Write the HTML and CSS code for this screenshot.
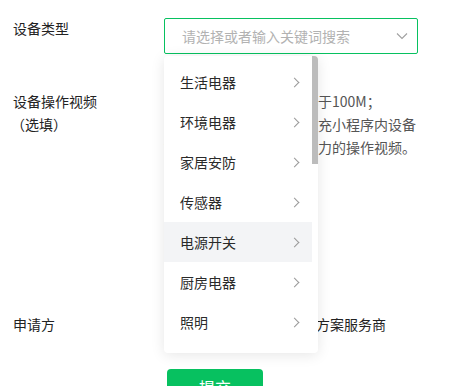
FILE: index.html
```html
<!DOCTYPE html>
<html>
<head>
    <meta charset="UTF-8">
    <title>设备信息</title>
    <link rel="stylesheet" href="styles.css">
</head>
<body>
    <div class="form">
        <div class="form-row">
            <div class="form-label">设备类型</div>
            <div class="form-field">
                <div class="select">
                    <div class="select-box">
                        <span class="placeholder">请选择或者输入关键词搜索</span>
                        <svg class="select-arrow" width="12" height="8" viewBox="0 0 12 8"><path d="M1 1.5 L6 6.5 L11 1.5" fill="none" stroke="#a0a0a0" stroke-width="1.1"/></svg>
                    </div>
                    <!-- Dropdown -->
                    <div class="dropdown">
                        <div class="dropdown-list">
                            <div class="dropdown-item">生活电器<span class="chevron"></span></div>
                            <div class="dropdown-item">环境电器<span class="chevron"></span></div>
                            <div class="dropdown-item">家居安防<span class="chevron"></span></div>
                            <div class="dropdown-item">传感器<span class="chevron"></span></div>
                            <div class="dropdown-item active">电源开关<span class="chevron"></span></div>
                            <div class="dropdown-item">厨房电器<span class="chevron"></span></div>
                            <div class="dropdown-item">照明<span class="chevron"></span></div>
                            <div class="dropdown-item">个人护理<span class="chevron"></span></div>
                            <div class="dropdown-item">健康监测<span class="chevron"></span></div>
                            <div class="dropdown-item">运动健身<span class="chevron"></span></div>
                            <div class="dropdown-item">宠物用品<span class="chevron"></span></div>
                            <div class="dropdown-item">其他<span class="chevron"></span></div>
                        </div>
                        <div class="scroll-thumb"></div>
                    </div>
                </div>
            </div>
        </div>

        <div class="form-row video-row">
            <div class="form-label">设备操作视频<br><span class="optional">（选填）</span></div>
            <div class="form-field">
                <div class="tips">
                    <div>上传视频，文件大小需小于100M；</div>
                    <div>用于展示设备功能，可补充小程序内设备控制面板未展示的设备能力的操作视频。</div>
                </div>
                <div class="upload-box">+</div>
            </div>
        </div>

        <div class="form-row applicant-row">
            <div class="form-label">申请方</div>
            <div class="form-field radios">
                <label class="radio"><span class="radio-dot"></span>设备品牌商</label>
                <label class="radio"><span class="radio-dot"></span>方案服务商</label>
            </div>
        </div>

        <div class="form-actions">
            <button class="submit-button">提交</button>
        </div>
    </div>
</body>
</html>
```

FILE: styles.css
```css
body {
    margin: 0;
    font-family: "Noto Sans CJK SC", sans-serif;
    font-size: 14px;
    color: #333;
    background: #fff;
}
.form {
    padding: 18px 0 0 13px;
}
.form-row {
    display: grid;
    grid-template-columns: 151px 254px;
}
.form-label {
    line-height: 20px;
    color: #222;
}
.optional {
    margin-left: -2px;
}

/* Select */
.select {
    position: relative;
}
.select-box {
    height: 34px;
    border: 1px solid #07c160;
    border-radius: 2px;
    display: flex;
    align-items: center;
    justify-content: space-between;
    padding: 0 9px 0 17px;
}
.placeholder {
    color: #b2b2b2;
}
.select-arrow {
    display: block;
}

/* Dropdown */
.dropdown {
    position: absolute;
    top: 38px;
    left: 0;
    width: 154px;
    height: 297px;
    overflow: hidden;
    background: #fff;
    border-radius: 4px;
    box-shadow: 0 2px 14px rgba(0,0,0,0.1);
    z-index: 10;
}
.dropdown-list {
    padding: 6px 0;
    margin-right: 6px;
}
.scroll-thumb {
    position: absolute;
    top: 0;
    right: 0;
    width: 6px;
    height: 108px;
    background: #bcbcbc;
}
.dropdown-item {
    height: 40px;
    display: flex;
    align-items: center;
    justify-content: space-between;
    padding: 0 12px 0 16px;
    color: #2a2a2a;
    cursor: pointer;
}
.dropdown-item.active,
.dropdown-item:hover {
    background-color: #f3f4f6;
}
.chevron {
    width: 6px;
    height: 6px;
    border-top: 1px solid #999;
    border-right: 1px solid #999;
    transform: rotate(45deg);
    margin-right: 2px;
}

/* Video row */
.video-row {
    margin-top: 36px;
}
.video-row .form-label {
    line-height: 23px;
}
.tips {
    color: #555;
    line-height: 23px;
}
.upload-box {
    width: 96px;
    height: 96px;
    margin-top: 14px;
    border: 1px dashed #ccc;
    display: flex;
    align-items: center;
    justify-content: center;
    color: #bbb;
    font-size: 28px;
}

/* Applicant row */
.applicant-row {
    margin-top: 42px;
}
.applicant-row .form-label {
    line-height: 22px;
}
.radios {
    display: flex;
    align-items: center;
    gap: 30px;
    line-height: 22px;
}
.radio {
    display: flex;
    align-items: center;
    gap: 10px;
    color: #222;
}
.radio-dot {
    width: 14px;
    height: 14px;
    border: 1px solid #ccc;
    border-radius: 50%;
}

.form-actions {
    padding: 34px 0 0 154px;
}
.submit-button {
    width: 96px;
    height: 36px;
    border: none;
    border-radius: 4px;
    background-color: #07c160;
    color: #fff;
    font-family: inherit;
    font-size: 16px;
    cursor: pointer;
}
```
